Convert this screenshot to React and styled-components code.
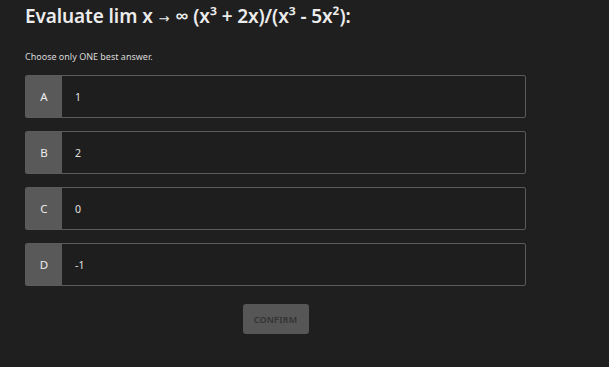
import React from 'react';
import styled, { createGlobalStyle } from 'styled-components';

const GlobalStyle = createGlobalStyle`
  html, body {
    margin: 0;
    padding: 0;
    background: #1f1f1f;
  }
  body {
    font-family: "Noto Sans", "Open Sans", sans-serif;
  }
`

const Page = styled.div`
  width: 609px;
  height: 367px;
  box-sizing: border-box;
  padding: 2px 25px 0 25px;
  background: #1f1f1f;
  color: #e6e6e6;
`

const Title = styled.h1`
  margin: 0;
  height: 28px;
  font-size: 19px;
  font-weight: 600;
  line-height: 28px;
  letter-spacing: -0.1px;
  color: #ececec;
  white-space: nowrap;
`

const Arrow = styled.span`
  font-family: "DejaVu Sans", sans-serif;
  font-size: 13px;
  font-weight: 400;
  line-height: 1;
  margin: 0 1px;
`

const Hint = styled.p`
  margin: 21px 0 12px 0;
  font-size: 9px;
  line-height: 12px;
  color: #d8d8d8;
`

const List = styled.ul`
  list-style: none;
  margin: 0;
  padding: 0;
  display: flex;
  flex-direction: column;
  gap: 13px;
  width: 501px;
`

const Option = styled.li`
  display: flex;
  height: 43px;
  box-sizing: border-box;
  border: 1px solid #5b5b5b;
  border-radius: 2px;
  overflow: hidden;
  background: #1e1e1e;
`

const Letter = styled.span`
  width: 36px;
  flex: none;
  display: flex;
  align-items: center;
  justify-content: center;
  background: #595959;
  font-size: 11.5px;
  color: #ededed;
`

const Answer = styled.span`
  display: flex;
  align-items: center;
  padding-left: 13px;
  font-size: 10.5px;
  color: #e0e0e0;
`

const Footer = styled.div`
  display: flex;
  justify-content: center;
  width: 501px;
  margin-top: 18px;
`

const Button = styled.button`
  width: 66px;
  height: 30px;
  border: none;
  border-radius: 3px;
  background: #565656;
  color: #333333;
  font-family: inherit;
  font-size: 9px;
  font-weight: 600;
  letter-spacing: 0.2px;
`

const options = [
  { key: 'A', text: '1' },
  { key: 'B', text: '2' },
  { key: 'C', text: '0' },
  { key: 'D', text: '-1' },
]

const App = () => {
  return (
    <Page>
      <GlobalStyle />
      <Title>Evaluate lim x <Arrow>→</Arrow> ∞ (x³ + 2x)/(x³ - 5x²):</Title>
      <Hint>Choose only ONE best answer.</Hint>
      <List>
        {options.map(o => (
          <Option key={o.key}>
            <Letter>{o.key}</Letter>
            <Answer>{o.text}</Answer>
          </Option>
        ))}
      </List>
      <Footer>
        <Button>CONFIRM</Button>
      </Footer>
    </Page>
  )
}

export default App;
